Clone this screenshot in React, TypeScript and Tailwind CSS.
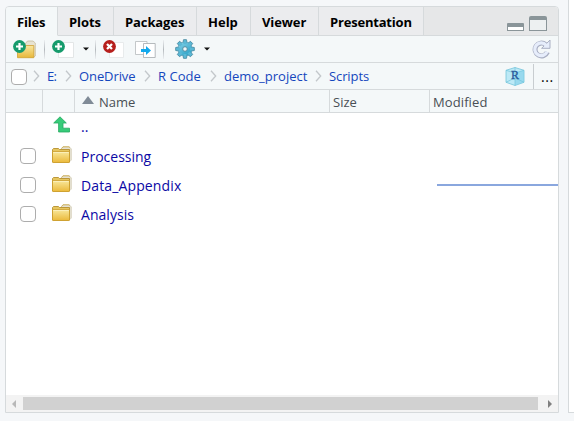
import React from "react";

const tabs = [
  { label: "Files", box: "w-[52px] bg-[#f4f8f9] border-b-[#f4f8f9]", text: "tracking-[-0.2px]" },
  { label: "Plots", box: "w-[56px] bg-[#ebecee] border-b-[#d6dadc]", text: "tracking-[-0.1px]" },
  { label: "Packages", box: "w-[83px] bg-[#ebecee] border-b-[#d6dadc]", text: "tracking-[-0.1px]" },
  { label: "Help", box: "w-[54px] bg-[#ebecee] border-b-[#d6dadc]", text: "tracking-[0px]" },
  { label: "Viewer", box: "w-[68px] bg-[#ebecee] border-b-[#d6dadc]", text: "tracking-[-0.1px]" },
  { label: "Presentation", box: "w-[105px] bg-[#ebecee] border-b-[#d6dadc]", text: "tracking-[-0.2px]" },
];

const crumbs = [
  { label: "E:", box: "w-[18px]", text: "tracking-[-0.6px]" },
  { label: "OneDrive", box: "w-[65px]", text: "tracking-[-0.1px]" },
  { label: "R Code", box: "w-[52px]", text: "tracking-[0.05px]" },
  { label: "demo_project", box: "w-[91px]", text: "tracking-[0px]" },
  { label: "Scripts", box: "w-[60px]", text: "tracking-[-0.1px]" },
];

const folders = [
  { label: "Processing", text: "tracking-[0px]" },
  { label: "Data_Appendix", text: "tracking-[0.13px]" },
  { label: "Analysis", text: "tracking-[0.05px]" },
];

function Box({ className = "" }: { className?: string }) {
  return <span className={`block h-4 w-4 shrink-0 rounded-[4px] border border-[#adadad] bg-white ${className}`} />;
}

function Chevron() {
  return (
    <svg className="shrink-0" width="7" height="12" viewBox="0 0 7 12" fill="none">
      <path d="M1 .8 5.7 6 1 11.2" stroke="#c3c8cb" strokeWidth="1.3" />
    </svg>
  );
}

function Folder() {
  return (
    <svg className="shrink-0" width="20" height="18" viewBox="0 0 20 18">
      <defs>
        <linearGradient id="folder" x1="0" y1="0" x2="0" y2="1">
          <stop stopColor="#f8e89c" />
          <stop offset="1" stopColor="#ebb93a" />
        </linearGradient>
      </defs>
      <path d="M9 3 11 .8h6l2.4 2V14l-1.6 1.6H9z" fill="#e5e1d2" stroke="#cfc8ae" strokeWidth=".6" />
      <path d="M9.5 2.6 11 .8h6l1 .9" stroke="#cda944" fill="none" strokeWidth=".8" />
      <path d="M.5 16V3.5l1-1h5l1 1h10V16z" fill="#e6c65f" stroke="#b5902f" strokeWidth=".9" />
      <path d="M.5 5.5h17V16a.7.7 0 0 1-.7.5H1.2A.7.7 0 0 1 .5 16z" fill="url(#folder)" stroke="#cc9e2b" strokeWidth=".9" />
      <path d="M1.2 6.4h15.6" stroke="#fdf4c6" strokeWidth=".8" />
    </svg>
  );
}

function PlusDisc() {
  return (
    <>
      <circle cx="6.5" cy="6.5" r="6.4" fill="#169b6c" />
      <path d="M6.5 3v7M3 6.5h7" stroke="white" strokeWidth="2.2" />
    </>
  );
}

function NewFolder() {
  return (
    <svg width="25" height="19" viewBox="0 0 25 19">
      <defs>
        <linearGradient id="newfolder" x1="0" y1="0" x2="0" y2="1">
          <stop stopColor="#f8e6a0" />
          <stop offset="1" stopColor="#e8b839" />
        </linearGradient>
      </defs>
      <path d="M12 4 14.5 1H20l2.3 2v13l-1.5 1h-6z" fill="#e7e3d2" stroke="#c6bd9d" strokeWidth=".8" />
      <path d="M4.5 5.5h16.3v12.2H4.5z" fill="url(#newfolder)" stroke="#d1a134" strokeWidth=".8" />
      <PlusDisc />
    </svg>
  );
}

function NewFile() {
  return (
    <svg width="22" height="19" viewBox="0 0 22 19">
      <path d="M6.5 2.5h15v15h-15z" fill="#fff" stroke="#e3e6e7" />
      <PlusDisc />
    </svg>
  );
}

function DeleteFile() {
  return (
    <svg width="22" height="19" viewBox="0 0 22 19">
      <path d="M6.5 2.5h14v15h-14z" fill="#fff" stroke="#e8ebec" />
      <circle cx="6.5" cy="6.5" r="6.4" fill="#b61f1c" />
      <path d="m4 4 5 5m0-5L4 9" stroke="white" strokeWidth="2.3" />
    </svg>
  );
}

function MoveFile() {
  return (
    <svg width="21" height="17" viewBox="0 0 21 17">
      <path d="M.5.5H12v13H.5z" fill="#fff" stroke="#b6babd" strokeWidth=".8" />
      <path d="M8.5 2.5h11.7v14H8.5z" fill="#fff" stroke="#a4a9ad" strokeWidth=".8" />
      <path d="M6 8h5V5l5 4.5-5 4.5v-3H6z" fill="#12a9ed" />
    </svg>
  );
}

const teeth = [0, 45, 90, 135, 180, 225, 270, 315];

function Gear() {
  return (
    <svg width="20" height="20" viewBox="0 0 20 20">
      <defs>
        <linearGradient id="gear" gradientUnits="userSpaceOnUse" x1="3" y1="2" x2="15" y2="18">
          <stop stopColor="#8bd6ea" />
          <stop offset="1" stopColor="#229bc2" />
        </linearGradient>
      </defs>
      {teeth.map((a) => (
        <path key={a} d="M7.9 4.5 8.5.7h3l.6 3.8z" transform={`rotate(${a} 10 10)`} fill="#55afcb" stroke="#4c8ca4" strokeWidth=".9" />
      ))}
      <circle cx="10" cy="10" r="7" fill="url(#gear)" stroke="#4d94ae" strokeWidth=".6" />
      {teeth.map((a) => (
        <path key={a} d="M8.4 5 8.9 1.2h2.2l.5 3.8z" transform={`rotate(${a} 10 10)`} fill="#5bb8d5" />
      ))}
      <circle cx="10" cy="10" r="2.3" fill="#eef7fa" stroke="#568da1" />
    </svg>
  );
}

function Caret() {
  return <svg width="6" height="4" viewBox="0 0 6 4"><path d="M0 .4h6L3 3.6z" fill="#111" /></svg>;
}

function Separator() {
  return <span className="block h-[19px] w-px bg-linear-to-b from-[#eceff1] via-[#b5babe] to-[#eceff1]" />;
}

function Refresh() {
  return (
    <svg width="19" height="20" viewBox="0 0 19 20" fill="none">
      <path d="M13.6 5.6A6.4 6.4 0 1 0 15.4 13" stroke="#a9afc3" strokeWidth="5" />
      <path d="M18 1v8.3H9.6L12 7l1.7-1.6z" fill="#e6edfb" stroke="#a9afc3" />
      <path d="M14.1 6.2A6.4 6.4 0 1 0 15.1 12.7" stroke="#e6edfb" strokeWidth="3.2" />
    </svg>
  );
}

function Project() {
  return (
    <svg width="20" height="19" viewBox="0 0 20 19">
      <path d="m10 .5 9 2.8v12L10 18.5 1 15.3v-12z" fill="#bce9f6" stroke="#73c4db" strokeWidth=".8" />
      <path d="m10 6 9-2.7v12l-9 3.2z" fill="#80cfe9" opacity=".6" />
      <path d="m1 3.3 9 2.7 9-2.7M10 .5v18M1 15.3l9-4.5 9 4.5" stroke="#72c5dc" strokeWidth=".7" fill="none" />
      <text x="5.9" y="12" fontFamily="Liberation Serif, serif" fontSize="12" fill="#27579a" stroke="#27579a" strokeWidth=".3">R</text>
    </svg>
  );
}

export default function App() {
  return (
    <div className="flex h-[421px] w-[574px] overflow-hidden bg-[#f5f7f9] pl-[5px] font-['Open_Sans',sans-serif] text-[13px] leading-4">
      <main className="mt-[6px] flex h-[407px] w-[554px] shrink-0 flex-col overflow-hidden rounded-t-[4px] border border-[#d6dadc] bg-white">
        <div className="flex h-[29px] shrink-0 bg-[#e6e7e8]">
          {tabs.map((t) => (
            <div key={t.label} className={`flex shrink-0 items-center border-r border-b border-r-[#d6dadc] pt-px pl-[11px] font-bold text-black ${t.box}`}>
              <span className={t.text}>{t.label}</span>
            </div>
          ))}
          <div className="flex grow items-end justify-end gap-[5px] border-b border-[#d6dadc] pr-[11px] pb-[4px]">
            <span className="h-[8px] w-[17px] rounded-t-[1px] border border-t-4 border-[#8a9599] bg-white" />
            <span className="h-[15px] w-[18px] rounded-t-[2px] border border-t-4 border-[#8a9599] bg-[#edf0f1]" />
          </div>
        </div>

        <div className="flex h-[27px] shrink-0 items-center border-b border-[#d6dadc] bg-[#f4f8f9] pl-[7px]">
          <div className="w-[31px]"><NewFolder /></div>
          <div className="w-[8px]"><Separator /></div>
          <div className="w-[31px]"><NewFile /></div>
          <div className="w-[12px]"><Caret /></div>
          <div className="w-[8px]"><Separator /></div>
          <div className="w-[32px]"><DeleteFile /></div>
          <div className="w-[28px]"><MoveFile /></div>
          <div className="w-[12px]"><Separator /></div>
          <div className="w-[29px]"><Gear /></div>
          <Caret />
          <div className="ml-auto pr-[7px]"><Refresh /></div>
        </div>

        <div className="flex h-[27px] shrink-0 items-center border-b border-[#d6dadc] bg-[#f4f8f9] pl-[5px]">
          <Box className="mt-px mr-[6px]" />
          {crumbs.map((c) => (
            <React.Fragment key={c.label}>
              <Chevron />
              <span className={`ml-[7px] shrink-0 whitespace-nowrap text-[#1547bd] ${c.box} ${c.text}`}>{c.label}</span>
            </React.Fragment>
          ))}
          <div className="ml-auto mr-[8px]"><Project /></div>
          <span className="h-[25px] w-px bg-[#c8cdd0]" />
          <span className="w-[24px] pt-px pl-[7px] text-[14px] tracking-[0.6px] text-black">...</span>
        </div>

        <div className="flex h-[23px] shrink-0 border-b border-[#d6dadc] bg-[#f4f8f9] text-[#494f55]">
          <span className="w-[37px] border-r border-[#d6dadc]" />
          <span className="w-[32px] border-r border-[#d6dadc]" />
          <div className="flex w-[255px] items-center border-r border-[#d6dadc] pt-px pl-[7px]">
            <svg className="-mt-[3px] mr-[5px]" width="12" height="8" viewBox="0 0 12 8"><path d="M6 0 12 8H0z" fill="#808b97" /></svg>
            <span className="tracking-[-0.05px]">Name</span>
          </div>
          <div className="flex w-[100px] items-center border-r border-[#d6dadc] pt-px pl-[3px] tracking-[0px]">Size</div>
          <div className="flex items-center pt-px pl-[3px] tracking-[0.1px]">Modified</div>
        </div>

        <div className="flex grow flex-col text-[14px] text-[#0b08a5]">
          <div className="flex h-[28px] pl-[47px]">
            <svg className="mt-[3px]" width="18" height="18" viewBox="0 0 18 18">
              <path d="M7 .8 13.3 7H10v5.2h6.5V16H5.6V7H.7z" fill="#37cb79" stroke="#25a85f" strokeWidth=".8" />
            </svg>
            <span className="mt-[6px] ml-[10px]">..</span>
          </div>
          {folders.map((f, i) => (
            <div key={f.label} className="flex h-[29px] items-center pl-[14px]">
              <Box className="mt-[1px] mr-[16px]" />
              <div className="-mt-px w-[29px]"><Folder /></div>
              <span className={`mt-[2px] ${f.text}`}>{f.label}</span>
              {i === 1 && <span className="ml-auto h-[2px] w-[121px] bg-[#8aa7de]" />}
            </div>
          ))}
        </div>

        <div className="flex h-[17px] shrink-0 items-center bg-[#f3f3f3]">
          <div className="w-[17px] pl-[6px]"><svg width="4" height="8" viewBox="0 0 4 8"><path d="M4 0v8L0 4z" fill="#b8b8b8" /></svg></div>
          <span className="h-[13px] w-[515px] bg-[#d1d1d1]" />
          <div className="grow pl-[10px]"><svg width="4" height="8" viewBox="0 0 4 8"><path d="M0 0v8l4-4z" fill="#808080" /></svg></div>
        </div>
      </main>
      <div className="ml-[9px] h-[413px] w-[10px] shrink-0 border-b border-l border-[#d6dadc] bg-white" />
    </div>
  );
}
